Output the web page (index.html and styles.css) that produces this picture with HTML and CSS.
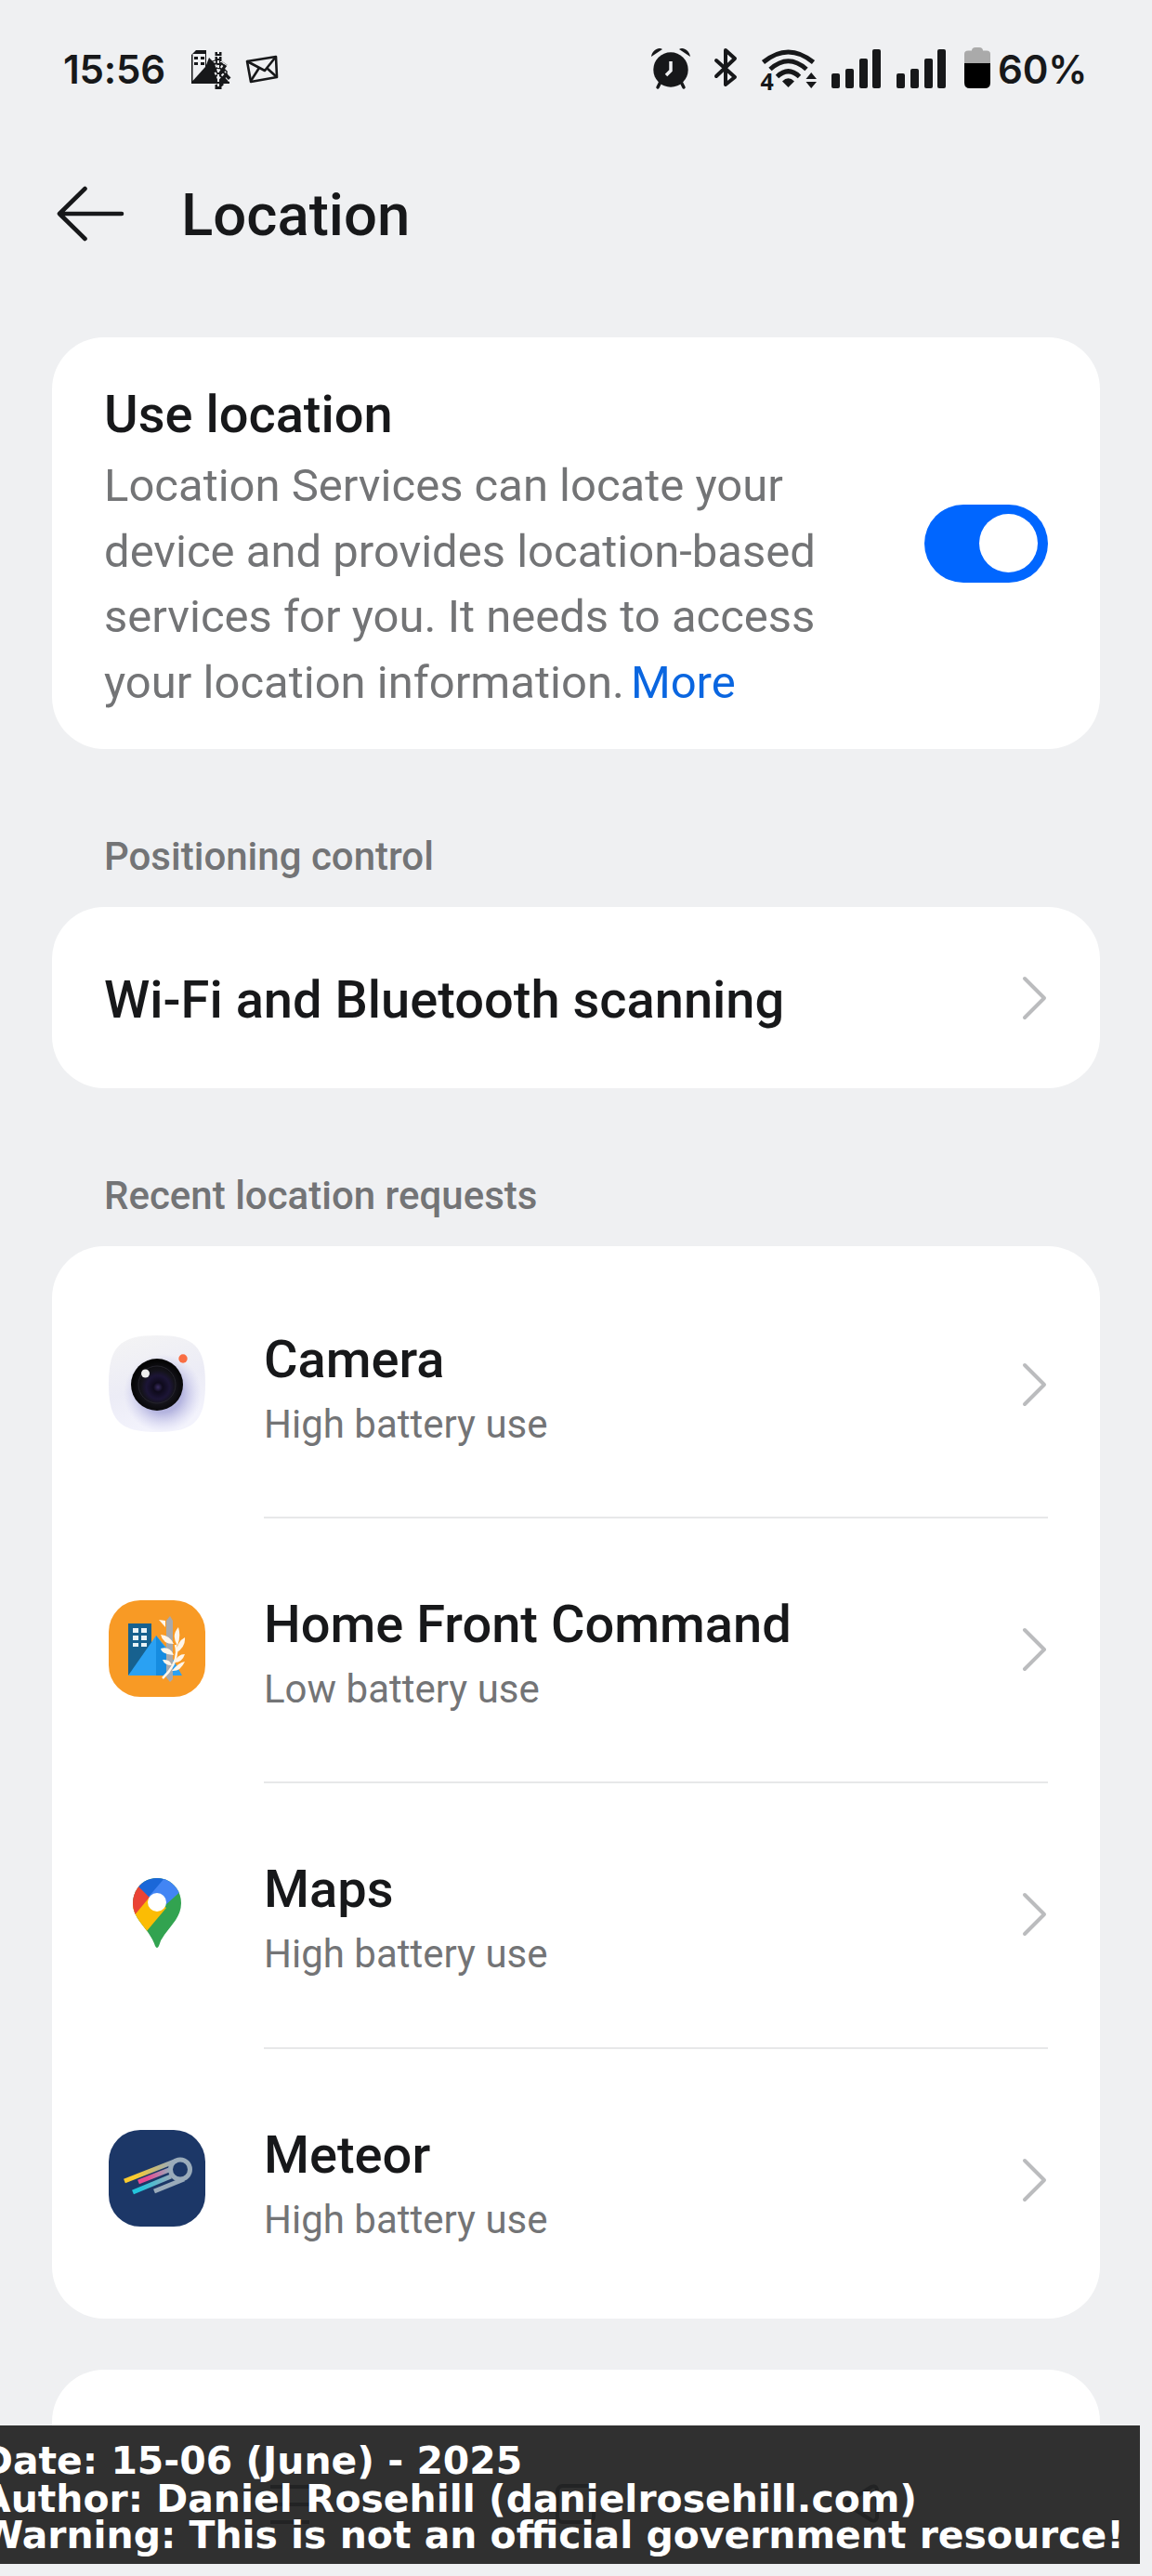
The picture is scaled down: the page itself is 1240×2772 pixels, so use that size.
FILE: index.html
```html
<!DOCTYPE html>
<html lang="en">
<head>
<meta charset="utf-8">
<title>Location</title>
<link rel="stylesheet" href="styles.css">
</head>
<body>
<div class="screen">
  <header class="status">
    <span class="clock">15:56</span>
    <svg class="status-left" width="100" height="54" viewBox="0 0 100 54">
      <path d="M2 6L7 1H18V17L21 9L28 16V8H33V16L41 24L38 33L43 35V37H2Z" fill="#17181a"/>
      <path d="M3.500 34V5H17V19Z" fill="#eff0f2"/>
      <path d="M5 8h4v3H5zM12 8h4v3h-4zM5 14h4v3H5zM12 14h4v3h-4z" fill="#17181a"/>
      <path d="M31 43V3M31 32l8-8M31 25l7-10M31 24l-5-12M31 32l-5-9M31 39l11-11" stroke="#17181a" stroke-width="7" fill="none" stroke-dasharray="5 1"/>
      <path d="M31 40V3M31 32l8-8M31 24l6-9M31 24l-4-11M31 32l-4-8" stroke="#eff0f2" stroke-width="2" fill="none" stroke-dasharray="3 2"/>
      <g fill="none" stroke="#17181a" stroke-width="2.600" stroke-linejoin="round"><path d="M62 13L93 8L94 30L66 35Z"/><path d="M62 13L81 23L93 8M66 34L75 20M94 30L83 20"/></g>
    </svg>
    <svg class="status-right" width="380" height="54" viewBox="0 0 380 54">
      <g fill="#17181a">
        <path d="M1 10C2 3 9-1 13 2ZM43 10C42 3 35-1 31 2Z"/>
        <circle cx="22" cy="24" r="18.700"/>
        <path d="M11 37L8 43M33 37L36 43" stroke="#17181a" stroke-width="3.500" stroke-linecap="round"/>
        <path d="M22 15V25L17 30" fill="none" stroke="#eff0f2" stroke-width="3.500"/>
        <path d="M71 14L91 32L81 40V3L91 12L71 31" fill="none" stroke="#17181a" stroke-width="4" stroke-linejoin="round" stroke-linecap="round"/>
        <g fill="none" stroke="#17181a" stroke-width="5"><path d="M121.500 16Q148.500-6 175.500 16M129 23.500Q148.500 6 168 23.500M136.500 31.500Q148.500 20 160.500 31.500"/></g>
        <path d="M142 36.500Q148.500 30 155 36.500L148.500 43Z"/>
        <path d="M167.500 34L173.200 27L179 34ZM167.500 37H179L173.200 44Z"/>
        <rect x="195" y="28" width="9" height="16" rx="2"/><rect x="210" y="23" width="9" height="21" rx="2"/><rect x="225" y="12" width="9" height="32" rx="2"/><rect x="239" y="2" width="9" height="42" rx="2"/>
        <rect x="265" y="28" width="9" height="16" rx="2"/><rect x="280" y="23" width="9" height="21" rx="2"/><rect x="295" y="12" width="9" height="32" rx="2"/><rect x="309" y="2" width="9" height="42" rx="2"/>
      </g>
      <path d="M338 17V7Q338 3.500 342 3.500H346Q346 0 350 0H354Q358 0 358 3.500H362Q366 3.500 366 7V17Z" fill="#aaa"/>
      <path d="M338 17H366V38Q366 44 360 44H344Q338 44 338 38Z" fill="#000"/>
      <text class="wifi-gen" x="118.500" y="46">4</text>
    </svg>
    <span class="battery">60%</span>
  </header>

  <div class="titlebar">
    <svg width="74" height="62" viewBox="0 0 74 62" fill="none" stroke="#17181a" stroke-width="4.600" stroke-linecap="round" stroke-linejoin="round"><path d="M31.500 4L4 31L31.500 58M4 31H71"/></svg>
    <h1>Location</h1>
  </div>

  <section class="card use-location">
    <div class="use-text">
      <h2>Use location</h2>
      <p>Location Services can locate your<br>device and provides location-based<br>services for you. It needs to access<br>your location information.<a class="more">More</a></p>
    </div>
    <div class="toggle"><div class="knob"></div></div>
  </section>

  <h3 class="label">Positioning control</h3>
  <section class="card scanning">
    <h2>Wi-Fi and Bluetooth scanning</h2>
    <svg class="chevron" width="28" height="50" viewBox="0 0 28 50"><path d="M3 4L24 25L3 46"/></svg>
  </section>

  <h3 class="label">Recent location requests</h3>
  <section class="card requests">
    <div class="row">
      <svg class="app" width="104" height="104" viewBox="0 0 104 104">
        <defs>
          <linearGradient id="body" x1="0" y1="0" x2=".3" y2="1"><stop offset="0" stop-color="#f4f4f4"/><stop offset=".6" stop-color="#ececf6"/><stop offset="1" stop-color="#f3f3fc"/></linearGradient>
          <radialGradient id="shade"><stop offset=".5" stop-color="#a5a5d8" stop-opacity=".8"/><stop offset="1" stop-color="#c8c8ee" stop-opacity="0"/></radialGradient>
          <radialGradient id="lens" cx=".52" cy=".55"><stop offset="0" stop-color="#392c61"/><stop offset=".18" stop-color="#0e0a1b"/><stop offset=".45" stop-color="#1c1536"/><stop offset=".65" stop-color="#14131a"/><stop offset="1" stop-color="#050506"/></radialGradient>
        </defs>
        <path d="M52 0C92 0 104 12 104 52S92 104 52 104S0 92 0 52S12 0 52 0Z" fill="url(#body)"/>
        <circle cx="58" cy="62" r="42" fill="url(#shade)"/>
        <circle cx="52" cy="53" r="28" fill="url(#lens)"/><circle cx="52" cy="53" r="20" fill="none" stroke="#25242c" stroke-width="1"/>
        <circle cx="39.500" cy="41" r="4.500" fill="#eee"/><circle cx="80" cy="25" r="4.700" fill="#f96d43"/>
      </svg>
      <div class="info"><div class="name">Camera</div><div class="usage">High battery use</div></div>
      <svg class="chevron" width="28" height="50" viewBox="0 0 28 50"><path d="M3 4L24 25L3 46"/></svg>
    </div>
    <div class="row">
      <svg class="app" width="104" height="104" viewBox="0 0 104 104">
        <rect width="104" height="104" rx="34" fill="#f89a25"/>
        <path d="M21 25H46V55L21 81Z" fill="#17618f"/>
        <path d="M26 30h6v5h-6zM35 30h6v5h-6zM26 38h6v5h-6zM35 38h6v5h-6zM26 46h6v4h-6zM35 46h6v4h-6z" fill="#e8f2f6"/>
        <path d="M21 81L51 38L62 51L79 81Z" fill="#2aa1f3"/><path d="M51 38L62 53L68 81H51Z" fill="#168ce0"/>
        <path d="M62 22L66 17L69 22V85L66 88L62 83Z" fill="#a8a9ac"/>
        <path d="M58 84Q77 66 72 48" stroke="#fff6ea" stroke-width="2.500" fill="none"/>
        <path d="M54 21L61 22L61 29ZM74 49Q67 38 75 29Q78 39 74 49ZM72 57Q74 44 82 40Q83 51 72 57ZM70 47Q58 47 56 37Q66 38 70 47ZM70 59Q57 58 56 52Q66 49 70 59ZM71 67Q74 58 82 58Q79 67 71 67ZM68 70Q60 70 58 64Q66 63 68 70ZM68 76Q75 67 82 66Q77 77 68 76Z" fill="#fff6ea"/>
      </svg>
      <div class="info"><div class="name">Home Front Command</div><div class="usage">Low battery use</div></div>
      <svg class="chevron" width="28" height="50" viewBox="0 0 28 50"><path d="M3 4L24 25L3 46"/></svg>
    </div>
    <div class="row">
      <svg class="app" width="104" height="104" viewBox="0 0 104 104">
        <defs><clipPath id="pin"><path d="M52 14C37 14 26 26 26 41C26 57 40 66 47 80Q49 84 50 87Q52 91 54 87Q56 80 60 75C68 64 78 55 78 41C78 26 67 14 52 14Z"/></clipPath></defs>
        <g clip-path="url(#pin)"><rect width="104" height="104" fill="#32a350"/><path d="M0 104L30 84L62 46L44 32L0 60Z" fill="#fbbc04"/><path d="M0 0H20L46 32L26 56L0 60Z" fill="#ea4335"/><path d="M20 11L43 34L52 34L66 8L52 0Z" fill="#1a67d8"/><path d="M43 34L72 0L104 4L60 44Z" fill="#4285f4"/></g>
        <circle cx="52" cy="40" r="10" fill="#fff"/>
      </svg>
      <div class="info"><div class="name">Maps</div><div class="usage">High battery use</div></div>
      <svg class="chevron" width="28" height="50" viewBox="0 0 28 50"><path d="M3 4L24 25L3 46"/></svg>
    </div>
    <div class="row">
      <svg class="app" width="104" height="104" viewBox="0 0 104 104">
        <defs>
          <linearGradient id="yellow"><stop offset=".2" stop-color="#fbcb2f"/><stop offset=".9" stop-color="#9aabba"/></linearGradient>
          <linearGradient id="pink"><stop offset=".3" stop-color="#e64b92"/><stop offset="1" stop-color="#9aabba"/></linearGradient>
          <linearGradient id="cyan"><stop offset=".2" stop-color="#23c5dc"/><stop offset="1" stop-color="#9aabba"/></linearGradient>
        </defs>
        <rect width="104" height="104" rx="34" fill="#1c3767"/>
        <g fill="none" stroke-width="5"><circle cx="77" cy="42.500" r="10.500" stroke="#9aabba"/><path d="M17 55L73 33" stroke="url(#yellow)"/><path d="M32 56L65 43" stroke="url(#pink)"/><path d="M26 67L67 50" stroke="url(#cyan)"/><path d="M49 66L81 53" stroke="#9aabba"/></g>
      </svg>
      <div class="info"><div class="name">Meteor</div><div class="usage">High battery use</div></div>
      <svg class="chevron" width="28" height="50" viewBox="0 0 28 50"><path d="M3 4L24 25L3 46"/></svg>
    </div>
  </section>
  <section class="card next"></section>

  <footer class="caption">
    <svg class="nav" width="1227" height="149" viewBox="0 0 1227 149" fill="none" stroke="#222324" stroke-width="4" stroke-linejoin="round"><path d="M291 66h42M291 85h42M291 104h42"/><rect x="600" y="65" width="39" height="39" rx="6"/><path d="M944 69V99Q943 104 938 102L913 86Q909 84 913 82L938 66Q943 64 944 69Z"/></svg>
    <div class="line first">Date: 15-06 (June) - 2025</div>
    <div class="line second">Author: Daniel Rosehill (danielrosehill.com)</div>
    <div class="line third">Warning: This is not an official government resource!</div>
  </footer>
</div>
</body>
</html>
```
FILE: styles.css
```css
* { box-sizing: border-box; }
body { margin: 0; background: #eff0f2; color: #17181a; font-family: Roboto, sans-serif; }
h1, h2, h3, p { margin: 0; font-weight: 500; }
svg { display: block; flex: none; }
.screen { position: relative; width: 1240px; height: 2772px; overflow: hidden; padding: 0 56px; }

.status { display: flex; height: 146px; padding: 50px 0 0 12px; margin-right: -56px; font: 600 42px/50px Inter, sans-serif; letter-spacing: -.2px; }
.clock { width: 136px; }
.status-left { margin: 3px 0 0 0; }
.status-right { margin: 1px 0 0 396px; }
.wifi-gen { font: 700 25px "Noto Sans", sans-serif; fill: #17181a; }
.battery { margin-left: -6px; }

.titlebar { display: flex; align-items: center; height: 168px; padding-left: 4px; gap: 61px; }
.titlebar h1 { font-size: 63.500px; line-height: 72px; padding-top: 3px; }

.card { background: #fff; border-radius: 56px; width: 1128px; padding: 0 56px; display: flex; align-items: center; justify-content: space-between; }
h2, .name { font-size: 56px; line-height: 66px; font-weight: 500; white-space: nowrap; }

.use-location { margin-top: 49px; height: 443px; }
.use-text { align-self: flex-start; padding-top: 50px; }
.use-location p { margin-top: 9px; font-size: 49px; line-height: 70.500px; font-weight: 400; color: #737476; white-space: nowrap; }
.more { color: #0a66e0; margin-left: 7px; }
.toggle { width: 133px; height: 84px; border-radius: 42px; background: #0066ff; padding: 10px 11px; display: flex; justify-content: flex-end; }
.knob { width: 63px; height: 63px; border-radius: 50%; background: #fff; }

.label { font-size: 42px; line-height: 50px; padding-left: 56px; color: #737476; }
.use-location + .label { margin-top: 91px; }
.scanning + .label { margin-top: 91px; }
.scanning { height: 195px; margin-top: 29px; }
.scanning h2 { padding-top: 4px; }
.chevron { fill: none; stroke: #bbbcbe; stroke-width: 4; stroke-linecap: round; stroke-linejoin: round; flex: none; }

.requests { flex-direction: column; justify-content: flex-start; margin-top: 29px; height: 1154px; padding-top: 8px; }
.row { display: flex; align-items: center; width: 100%; height: 285.200px; padding-left: 5px; }
.app { margin: 0 63px 6px 0; }
.info { flex: 1; height: 100%; border-bottom: 2px solid #e7e8e9; padding-top: 81px; }
.row .chevron { margin: 0 0 3px -28px; }
.row:last-child .info { border: 0; }
.usage { font-size: 42px; line-height: 50px; color: #737476; margin-top: 12px; }
.next { height: 66px; margin-top: 55px; border-radius: 56px 56px 0 0; }

.caption { position: absolute; left: 0; top: 2610px; width: 1227px; height: 149px; overflow: hidden; background: #303030; color: #fff; font: 700 40.900px/40px "DejaVu Sans", sans-serif; padding-top: 18px; white-space: nowrap; }
.nav { position: absolute; left: 0; top: 0; }
.line { position: relative; margin-left: -20px; height: 40px; }
.first { height: 41px; }
.second { height: 39px; }
```
